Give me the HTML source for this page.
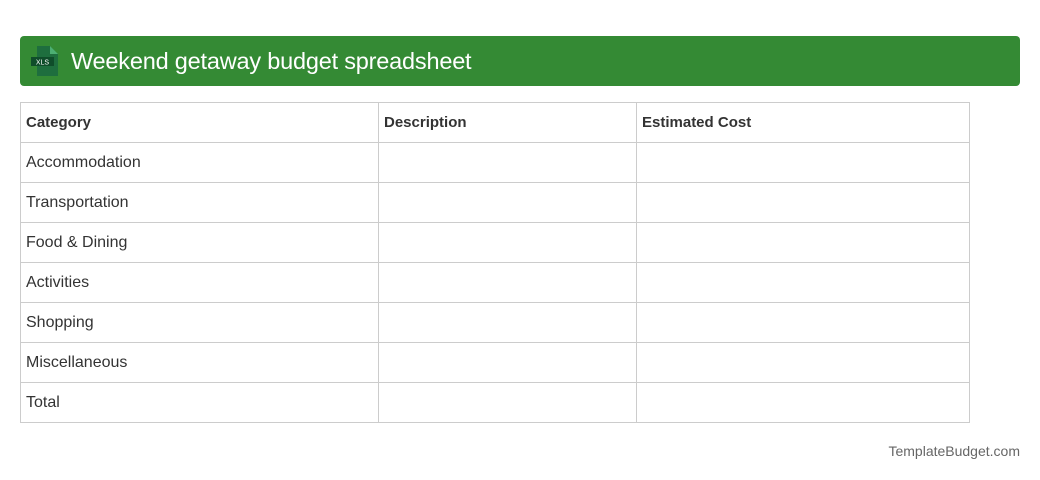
<!DOCTYPE html>
<html><head><style>
body{margin:0;width:1040px;height:480px;background:#fff;font-family:"Liberation Sans",Arial,sans-serif;position:relative;overflow:hidden}
.hdr{position:absolute;left:20px;top:36px;width:1000px;height:50px;background:#348a34;border-radius:4px}
.hdr .t{position:absolute;left:51px;top:12px;font-size:23.5px;letter-spacing:-0.2px;color:#fff}
.ic{position:absolute;left:11px;top:10px}
table{position:absolute;left:20px;top:102px;border-collapse:collapse;width:950px}
td{border:1px solid #ccc;height:39px;padding:0 0 0 5px;font-size:16px;color:#333}
tr:first-child td{font-weight:bold;font-size:15px}
.ft{position:absolute;right:20px;top:443px;font-size:14px;color:#666}
</style></head><body>
<div class="hdr">
<svg class="ic" width="30" height="30" viewBox="0 0 30 30">
<path d="M6 0H19L27 8V30H6Z" fill="#1e6e3e"/>
<path d="M19 0V8H27Z" fill="#4caf72"/>
<rect x="0" y="11" width="23" height="9" fill="#0f4d2a"/>
<text x="11.5" y="18.5" font-size="7" fill="#fff" text-anchor="middle" font-family="Liberation Sans">XLS</text>
</svg>
<div class="t">Weekend getaway budget spreadsheet</div>
</div>
<table>
<tr><td style="width:352px">Category</td><td style="width:252px">Description</td><td>Estimated Cost</td></tr>
<tr><td>Accommodation</td><td></td><td></td></tr>
<tr><td>Transportation</td><td></td><td></td></tr>
<tr><td>Food &amp; Dining</td><td></td><td></td></tr>
<tr><td>Activities</td><td></td><td></td></tr>
<tr><td>Shopping</td><td></td><td></td></tr>
<tr><td>Miscellaneous</td><td></td><td></td></tr>
<tr><td>Total</td><td></td><td></td></tr>
</table>
<div class="ft">TemplateBudget.com</div>
</body></html>
